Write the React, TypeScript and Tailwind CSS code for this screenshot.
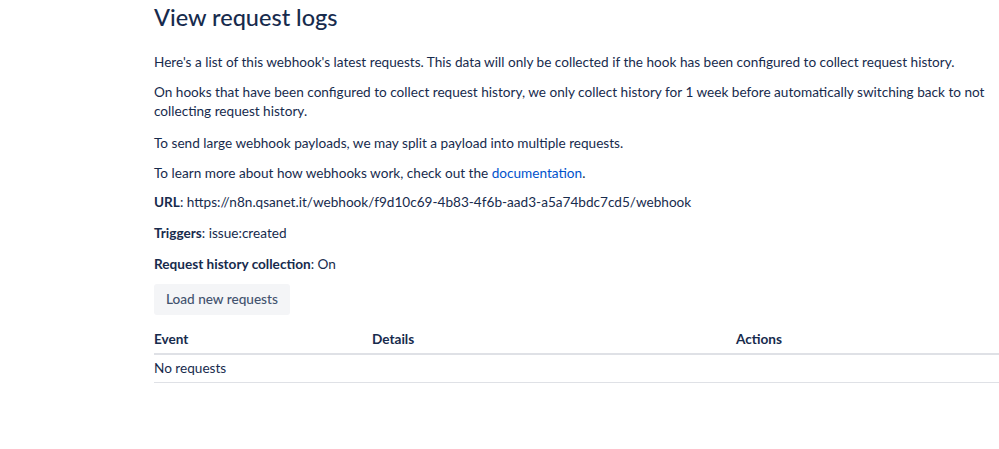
import React from "react";

export default function App() {
  return (
    <div
      className="w-[999px] h-[449px] bg-white overflow-hidden text-[#172B4D]"
      style={{ fontFamily: 'Lato, "Noto Sans", sans-serif' }}
    >
      <div className="ml-[154px] w-[900px]">
        <h2 className="text-[23.5px] leading-[28px] font-medium pt-[3px] text-[#172B4D]">
          View request logs
        </h2>
        <div className="mt-[22px] text-[13.6px] leading-[19px] w-[845px]">
          <p>
            Here's a list of this webhook's latest requests. This data will only be collected if the hook has been configured to collect request history.
          </p>
          <p className="mt-[11px]">
            On hooks that have been configured to collect request history, we only collect history for 1 week before automatically switching back to not collecting request history.
          </p>
          <p className="mt-[13px]">
            To send large webhook payloads, we may split a payload into multiple requests.
          </p>
          <p className="mt-[11px]">
            To learn more about how webhooks work, check out the{" "}
            <a className="text-[#0052CC]">documentation</a>.
          </p>
          <p className="mt-[10px]">
            <span className="font-bold">URL</span>: https://n8n.qsanet.it/webhook/f9d10c69-4b83-4f6b-aad3-a5a74bdc7cd5/webhook
          </p>
          <p className="mt-[12px]">
            <span className="font-bold">Triggers</span>: issue:created
          </p>
          <p className="mt-[12px]">
            <span className="font-bold">Request history collection</span>: On
          </p>
        </div>
        <button className="mt-[10px] h-[31px] px-[12px] rounded-[3px] bg-[#F4F5F7] text-[#42526E] text-[13.6px] font-medium">
          Load new requests
        </button>
        <table className="mt-[9px] w-[872px] text-[13.6px] border-collapse">
          <thead>
            <tr className="border-b-2 border-[#DFE1E6]">
              <th className="w-[218px] text-left font-bold pt-[5px] pb-[4px] leading-[20px]">Event</th>
              <th className="w-[364px] text-left font-bold pt-[5px] pb-[4px] leading-[20px]">Details</th>
              <th className="text-left font-bold pt-[5px] pb-[4px] leading-[20px]">Actions</th>
            </tr>
          </thead>
          <tbody>
            <tr className="border-b border-[#DFE1E6]">
              <td className="pt-[3px] pb-[4px] leading-[20px]" colSpan={3}>
                No requests
              </td>
            </tr>
          </tbody>
        </table>
      </div>
    </div>
  );
}
